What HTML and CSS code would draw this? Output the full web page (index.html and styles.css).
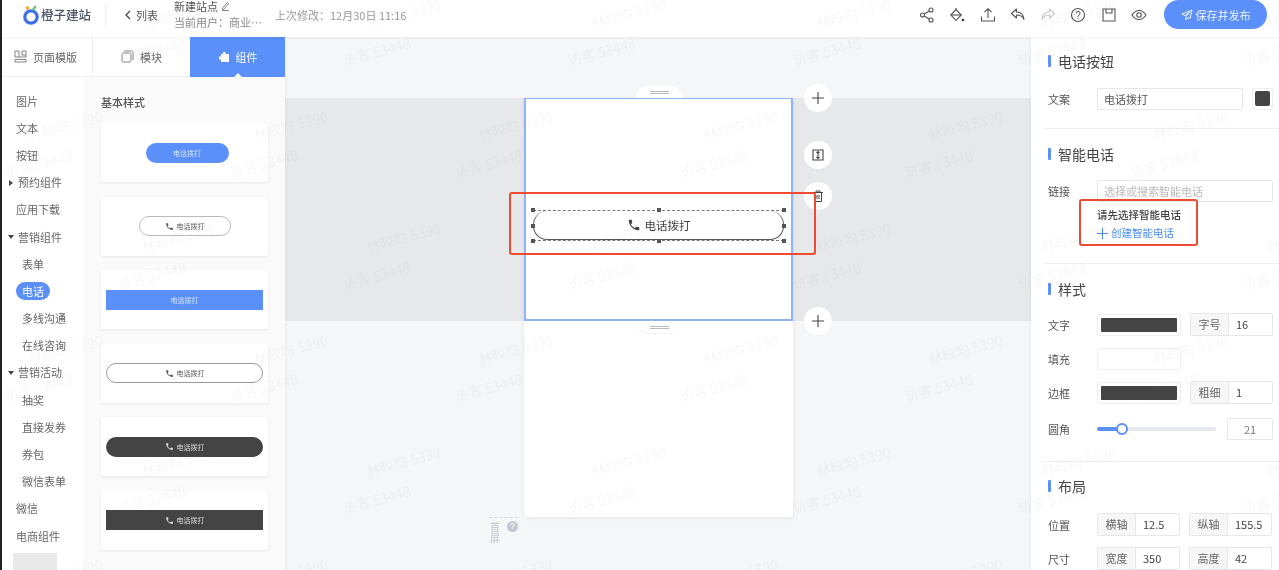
FILE: index.html
```html
<!DOCTYPE html>
<html lang="zh-CN">
  <head>
    <meta charset="UTF-8" />
    <meta name="viewport" content="width=device-width, initial-scale=1.0" />
    <title>橙子建站</title>
    <link rel="stylesheet" href="styles.css">
  </head>
  <body>
    <svg class="defs" width="0" height="0">
      <symbol id="phone" viewBox="0 0 24 24">
        <path d="M6.62 10.79c1.44 2.83 3.76 5.14 6.59 6.59l2.2-2.2c.27-.27.67-.36 1.02-.24 1.12.37 2.33.57 3.57.57.55 0 1 .45 1 1V20c0 .55-.45 1-1 1-9.39 0-17-7.61-17-17 0-.55.45-1 1-1h3.5c.55 0 1 .45 1 1 0 1.25.2 2.45.57 3.57.11.35.03.74-.25 1.02l-2.2 2.2z" fill="currentColor" />
      </symbol>
    </svg>

    <div class="page">
      <header class="topbar">
        <div class="brand">
          <svg class="logo" width="18" height="23" viewBox="0 0 18 23">
            <circle cx="9" cy="14" r="6.200" fill="none" stroke="#3c6fe8" stroke-width="3.200" />
            <circle cx="5.500" cy="5" r="1.700" fill="#f5a623" />
            <path d="M10 7.500c.3-2.800 1.800-4.500 4.300-5C14.300 5.300 12.800 7.100 10 7.500z" fill="#63c26a" />
          </svg>
          <span class="brand-name">橙子建站</span>
        </div>
        <div class="back">
          <svg width="8" height="10" viewBox="0 0 8 10"><path d="M6 1 2 5l4 4" fill="none" stroke="#444" stroke-width="1.300" /></svg>
          列表
        </div>
        <div class="site-info">
          <div class="site-name">
            新建站点
            <svg width="9" height="10" viewBox="0 0 9 10"><path d="M1.500 7 6.500 1.500l1.300 1.200-5 5.500-1.600.3zM1 9.500h7" fill="none" stroke="#666" stroke-width=".8" /></svg>
          </div>
          <div class="site-user">当前用户：商业…</div>
        </div>
        <div class="modified">上次修改：12月30日 11:16</div>

        <div class="tools">
          <svg width="16" height="16" viewBox="0 0 16 16"><g fill="none" stroke="#555" stroke-width="1.100"><circle cx="3.500" cy="8" r="2" /><circle cx="12" cy="3" r="2" /><circle cx="12" cy="13" r="2" /><path d="M5.300 7 10.200 4M5.300 9l4.900 3" /></g></svg>
          <svg width="16" height="16" viewBox="0 0 16 16"><g fill="none" stroke="#555" stroke-width="1.100"><path d="M7 2.500 1.800 8 7 13.300 12.300 8z" /><path d="M2 8h10" /><path d="M7 2.500V1" /></g><circle cx="14" cy="13" r="1.300" fill="#333" /></svg>
          <svg width="16" height="16" viewBox="0 0 16 16"><path d="M8 11V2M4.500 5 8 1.800 11.500 5M1.500 9.500v4.500h13V9.500" fill="none" stroke="#555" stroke-width="1.100" /></svg>
          <svg width="16" height="16" viewBox="0 0 16 16"><path d="M6.500 2 1.500 6.500l5 4.500V8c3.500 0 6 1 7.500 4.500C13.500 8 11 5 6.500 5z" fill="none" stroke="#555" stroke-width="1.100" stroke-linejoin="round" /></svg>
          <svg width="16" height="16" viewBox="0 0 16 16"><path d="M9.500 2l5 4.500-5 4.500V8C6 8 3.500 9 2 12.500 2.500 8 5 5 9.500 5z" fill="none" stroke="#c4c6cc" stroke-width="1.100" stroke-linejoin="round" /></svg>
          <svg width="16" height="16" viewBox="0 0 16 16"><circle cx="8" cy="8" r="6.500" fill="none" stroke="#555" stroke-width="1.100" /><text class="tool-q" x="8" y="11.500" text-anchor="middle">?</text></svg>
          <svg width="16" height="16" viewBox="0 0 16 16"><path d="M2 2h12v12H2zM5 2v4h6V2" fill="none" stroke="#555" stroke-width="1.100" /></svg>
          <svg width="16" height="16" viewBox="0 0 16 16"><path d="M1 8c2-3.200 4.300-4.500 7-4.500s5 1.300 7 4.500c-2 3.200-4.300 4.500-7 4.500S3 11.200 1 8z" fill="none" stroke="#555" stroke-width="1.100" /><circle cx="8" cy="8" r="2.200" fill="none" stroke="#555" stroke-width="1.100" /></svg>
        </div>
        <button class="publish">
          <svg width="12" height="12" viewBox="0 0 12 12"><path d="M11 1 1 5l3 1.500L9 3 5 7.500V11l2-2.500 2 1z" fill="none" stroke="#fff" stroke-width=".9" stroke-linejoin="round" /></svg>
          保存并发布
        </button>
      </header>

      <div class="main">
        <aside class="left">
          <div class="tabs">
            <div class="tab tab-template">
              <svg width="13" height="13" viewBox="0 0 13 13"><path d="M1 1h4v6H1zM8 1h4v4H8zM1 9.500h11V12H1zM5 7h7V5" fill="none" stroke="#777" stroke-width=".9" /></svg>
              页面模版
            </div>
            <div class="tab tab-module">
              <svg width="13" height="13" viewBox="0 0 13 13"><path d="M3 1h7.500A1.500 1.500 0 0 1 12 2.500V10M1 4.500A1.500 1.500 0 0 1 2.500 3h6A1.500 1.500 0 0 1 10 4.500v6A1.500 1.500 0 0 1 8.500 12h-6A1.500 1.500 0 0 1 1 10.500z" fill="none" stroke="#777" stroke-width=".9" /></svg>
              模块
            </div>
            <div class="tab tab-active">
              <svg width="12" height="12" viewBox="0 0 12 12"><path d="M5 1h2.500v2H11v8H3V8.500H1V5.500h2V3h2z" fill="#fff" /></svg>
              组件
            </div>
          </div>
          <div class="left-body">
            <nav class="nav">
              <a>图片</a>
              <a>文本</a>
              <a>按钮</a>
              <a class="group closed">预约组件</a>
              <a>应用下载</a>
              <a class="group open">营销组件</a>
              <a class="sub">表单</a>
              <a class="sub"><span class="nav-on">电话</span></a>
              <a class="sub">多线沟通</a>
              <a class="sub">在线咨询</a>
              <a class="group open">营销活动</a>
              <a class="sub">抽奖</a>
              <a class="sub">直接发券</a>
              <a class="sub">券包</a>
              <a class="sub">微信表单</a>
              <a>微信</a>
              <a>电商组件</a>
              <div class="nav-blur"></div>
            </nav>
            <div class="styles">
              <h4>基本样式</h4>
              <div class="card"><div class="demo demo-fill-round">电话拨打</div></div>
              <div class="card"><div class="demo demo-line-round"><svg width="9" height="9"><use href="#phone" /></svg>电话拨打</div></div>
              <div class="card"><div class="demo demo-fill-wide">电话拨打</div></div>
              <div class="card"><div class="demo demo-line-wide"><svg width="9" height="9"><use href="#phone" /></svg>电话拨打</div></div>
              <div class="card"><div class="demo demo-dark-round"><svg width="9" height="9"><use href="#phone" /></svg>电话拨打</div></div>
              <div class="card"><div class="demo demo-dark-wide"><svg width="9" height="9"><use href="#phone" /></svg>电话拨打</div></div>
            </div>
          </div>
        </aside>

        <section class="canvas">
          <div class="band"></div>
          <div class="phone">
            <div class="block">
              <span class="handle handle-top"><i></i></span>
              <span class="handle handle-bottom"><i></i></span>
              <div class="selected">
                <div class="call-btn"><svg width="14" height="14"><use href="#phone" /></svg>电话拨打</div>
                <i class="dot d1"></i><i class="dot d2"></i><i class="dot d3"></i>
                <i class="dot d4"></i><i class="dot d5"></i>
                <i class="dot d6"></i><i class="dot d7"></i><i class="dot d8"></i>
              </div>
            </div>
            <span class="float f1"><svg width="14" height="14" viewBox="0 0 14 14"><path d="M7 1v12M1 7h12" stroke="#444" stroke-width="1.100" /></svg></span>
            <span class="float f2"><svg width="14" height="14" viewBox="0 0 14 14"><path d="M2 2h10v10H2zM7 3.500v7M5.500 5 7 3.500 8.500 5M5.500 9 7 10.500 8.500 9" fill="none" stroke="#444" stroke-width="1.100" /></svg></span>
            <span class="float f3"><svg width="14" height="14" viewBox="0 0 14 14"><path d="M2 3.500h10M5 3.500V2h4v1.500M3.500 3.500V12.500h7V3.500M6 6v4M8 6v4" fill="none" stroke="#444" stroke-width="1" /></svg></span>
            <span class="float f4"><svg width="14" height="14" viewBox="0 0 14 14"><path d="M7 1v12M1 7h12" stroke="#444" stroke-width="1.100" /></svg></span>
            <div class="fold">
              <span class="fold-text">首屏</span>
              <span class="fold-help">?</span>
            </div>
          </div>
        </section>

        <aside class="right">
          <section class="panel panel-text">
            <h3>电话按钮</h3>
            <div class="row">
              <label>文案</label>
              <div class="field grow">电话拨打</div>
              <span class="swatch-small"><i></i></span>
            </div>
          </section>
          <section class="panel panel-phone">
            <h3>智能电话</h3>
            <div class="row">
              <label>链接</label>
              <div class="field grow placeholder">选择或搜索智能电话</div>
            </div>
            <div class="tip">
              <p>请先选择智能电话</p>
              <a><svg width="11" height="11" viewBox="0 0 11 11"><path d="M5.500 0v11M0 5.500h11" stroke="#4a8cf0" /></svg>创建智能电话</a>
            </div>
          </section>
          <section class="panel panel-style">
            <h3>样式</h3>
            <div class="row">
              <label>文字</label>
              <span class="swatch"><i></i></span>
              <div class="addon"><b>字号</b><span>16</span></div>
            </div>
            <div class="row">
              <label>填充</label>
              <span class="swatch swatch-empty"></span>
            </div>
            <div class="row">
              <label>边框</label>
              <span class="swatch"><i></i></span>
              <div class="addon"><b>粗细</b><span>1</span></div>
            </div>
            <div class="row row-radius">
              <label>圆角</label>
              <div class="slider"><i></i></div>
              <div class="field value">21</div>
            </div>
          </section>
          <section class="panel panel-layout">
            <h3>布局</h3>
            <div class="row">
              <label>位置</label>
              <div class="addon"><b>横轴</b><span>12.5</span></div>
              <div class="addon"><b>纵轴</b><span>155.5</span></div>
            </div>
            <div class="row">
              <label>尺寸</label>
              <div class="addon"><b>宽度</b><span>350</span></div>
              <div class="addon"><b>高度</b><span>42</span></div>
            </div>
          </section>
        </aside>
      </div>

      <!-- red annotation boxes from the screenshot -->
      <div class="mark mark-button"></div>
      <div class="mark mark-tip"></div>

      <svg class="watermark" width="100%" height="100%">
        <defs>
          <pattern id="wm" width="225" height="224" patternUnits="userSpaceOnUse" patternTransform="translate(-5 -25)">
            <text x="70" y="156" transform="rotate(-15 70 156)">林晈昀 5390</text>
            <text x="183" y="44" transform="rotate(-15 183 44)">林晈昀 5390</text>
            <text x="43" y="194" transform="rotate(-15 43 194)">访客 53448</text>
            <text x="156" y="82" transform="rotate(-15 156 82)">访客 53448</text>
          </pattern>
        </defs>
        <rect width="100%" height="100%" fill="url(#wm)" />
      </svg>
    </div>
  </body>
</html>
```

FILE: styles.css
```css
/* General styles */
html,
body {
  margin: 0;
  height: 100%;
  overflow: hidden;
  background: #222;
}

body {
  font-family: "Noto Sans CJK SC", "Noto Sans", sans-serif;
  font-size: 11px;
  color: #555;
}

.defs {
  position: absolute;
}

.page {
  position: relative;
  display: flex;
  flex-direction: column;
  height: 570px;
  margin-left: 2px;
  background: #f5f6f8;
  overflow: hidden;
  filter: blur(0.5px);
}

/* Top bar */
.topbar {
  position: relative;
  z-index: 3;
  display: flex;
  align-items: center;
  flex: none;
  height: 29px;
  padding-bottom: 8px;
  background: #fff;
  box-shadow: 0 1px 3px rgba(0, 0, 0, 0.06);
}

.brand {
  display: flex;
  align-items: center;
  gap: 1px;
  width: 83px;
  height: 22px;
  margin-left: 20px;
  border-right: 1px solid #eee;
}

.brand-name {
  font-size: 12.500px;
  font-weight: 500;
  color: #4b5563;
  white-space: nowrap;
}

.back {
  display: flex;
  align-items: center;
  gap: 4px;
  width: 50px;
  margin-left: 18px;
  font-size: 11px;
  color: #555;
}

.site-info {
  align-self: flex-start;
  width: 101px;
  line-height: 12px;
}

.site-name {
  display: flex;
  align-items: center;
  gap: 3px;
  color: #555;
}

.site-user {
  margin-top: 4px;
  color: #888;
}

.modified {
  color: #999;
  font-size: 11px;
}

.tools {
  display: flex;
  gap: 14.300px;
  margin-left: auto;
  margin-right: 17px;
}

.tool-q {
  font: 10px "Liberation Sans", sans-serif;
  fill: #555;
}

.publish {
  display: flex;
  align-items: center;
  justify-content: center;
  gap: 3px;
  width: 103px;
  height: 29px;
  margin-right: 12px;
  padding: 0;
  border: none;
  border-radius: 15px;
  background: #5b8ff9;
  color: #eef3ff;
  font: 11px "Noto Sans CJK SC", sans-serif;
}

.main {
  display: flex;
  flex: 1;
  min-height: 0;
}

/* Left panel */
.left {
  position: relative;
  z-index: 2;
  display: flex;
  flex-direction: column;
  flex: none;
  width: 283px;
  background: #fafafb;
  box-shadow: 1px 0 3px rgba(0, 0, 0, 0.04);
}

.tabs {
  display: flex;
  flex: none;
  height: 40px;
  background: #fff;
  border-bottom: 1px solid #f0f0f2;
  box-sizing: border-box;
}

.tab {
  position: relative;
  display: flex;
  align-items: center;
  justify-content: center;
  gap: 6px;
  color: #666;
}

.tab-template {
  width: 91px;
  padding-right: 3px;
  box-sizing: border-box;
  border-right: 1px solid #f0f0f2;
}

.tab-module {
  width: 97px;
}

.tab-active {
  width: 95px;
  height: 40px;
  background: #5b8ff9;
  color: #fff;
}

.tab-active:after {
  content: "";
  position: absolute;
  left: 44px;
  bottom: 0;
  border: 4px solid transparent;
  border-top: 0;
  border-bottom-color: #fafafb;
}

.left-body {
  display: flex;
  flex: 1;
  min-height: 0;
}

.nav {
  flex: none;
  width: 82px;
  padding-top: 10px;
  background: #fff;
}

.nav a {
  position: relative;
  display: flex;
  align-items: center;
  height: 27.200px;
  padding-left: 14px;
  color: #666;
}

.nav a.sub {
  padding-left: 20px;
}

.nav a.group {
  padding-left: 16px;
}

.group:before {
  content: "";
  position: absolute;
  left: 7px;
  top: 11px;
}

.group.closed:before {
  border: 3.500px solid transparent;
  border-left: 4px solid #444;
  border-right: 0;
}

.group.open:before {
  left: 6px;
  top: 12px;
  border: 3.500px solid transparent;
  border-top: 4px solid #444;
  border-bottom: 0;
}

.nav-on {
  margin-left: -6px;
  padding: 0 6px;
  height: 18px;
  line-height: 18px;
  border-radius: 9px;
  background: #5b8ff9;
  color: #fff;
}

.nav-blur {
  width: 44px;
  height: 30px;
  margin: 4px 0 0 11px;
  background: #e9e9ea;
}

.styles {
  flex: 1;
  padding: 0 17px;
}

.styles h4 {
  margin: 17px 0 13px;
  font-size: 11px;
  line-height: 16px;
  font-weight: 500;
  color: #555;
}

.card {
  display: flex;
  align-items: center;
  justify-content: center;
  height: 59px;
  margin-bottom: 14.500px;
  padding: 0 5px;
  background: #fff;
  border-radius: 2px;
  box-shadow: 0 1px 3px rgba(0, 0, 0, 0.08);
}

.demo {
  display: flex;
  align-items: center;
  justify-content: center;
  gap: 3px;
  box-sizing: border-box;
  height: 20px;
  font-size: 7px;
}

.demo-fill-round {
  width: 83px;
  margin-left: 5px;
  border-radius: 10px;
  background: #5b8ff9;
  color: #d8e4fd;
}

.demo-line-round {
  width: 92px;
  border: 1px solid #bbb;
  border-radius: 10px;
  color: #555;
}

.demo-fill-wide {
  width: 100%;
  background: #5b8ff9;
  color: #d8e4fd;
}

.demo-line-wide {
  width: 100%;
  border: 1px solid #999;
  border-radius: 10px;
  color: #555;
}

.demo-dark-round {
  width: 100%;
  border-radius: 10px;
  background: #444;
  color: #ddd;
}

.demo-dark-wide {
  width: 100%;
  background: #444;
  color: #ddd;
}

/* Canvas */
.canvas {
  position: relative;
  flex: 1;
  min-width: 0;
}

.band {
  position: absolute;
  left: 0;
  right: 0;
  top: 61px;
  height: 223px;
  background: #e7e8ea;
}

.phone {
  position: relative;
  width: 269px;
  height: 419px;
  margin: 61px 0 0 239px;
  background: #fff;
  box-shadow: 0 1px 4px rgba(0, 0, 0, 0.08);
  border-radius: 0 0 2px 2px;
}

.block {
  position: relative;
  box-sizing: border-box;
  height: 223px;
  padding: 111px 7px 0;
  border: 2px solid #8fb2fb;
  border-width: 1px 2px 2px 2px;
}

.handle {
  position: absolute;
  left: 110px;
  display: flex;
  align-items: center;
  justify-content: center;
  width: 46px;
  height: 12px;
  background: #fff;
}

.handle i {
  width: 19px;
  height: 1px;
  border-top: 1px solid #bbb;
  border-bottom: 1px solid #bbb;
}

.handle-top {
  top: -13px;
  border-radius: 12px 12px 0 0;
}

.handle-bottom {
  bottom: -14px;
  border-radius: 0 0 12px 12px;
  box-shadow: 0 1px 2px rgba(0, 0, 0, 0.05);
}

.selected {
  position: relative;
  box-sizing: border-box;
  border: 1px dashed #777;
  border-left: none;
  border-right: none;
}

.call-btn {
  display: flex;
  align-items: center;
  justify-content: center;
  gap: 4px;
  height: 29px;
  box-sizing: border-box;
  border: 1px solid #555;
  border-top: none;
  border-radius: 14px;
  color: #444;
  font-size: 11.500px;
}

.dot {
  position: absolute;
  width: 4px;
  height: 4px;
  background: #555;
}

.d1 { left: -2px; top: -3px; }
.d2 { left: calc(50% - 2px); top: -3px; }
.d3 { right: -2px; top: -3px; }
.d4 { left: -2px; top: calc(50% - 2px); }
.d5 { right: -2px; top: calc(50% - 2px); }
.d6 { left: -2px; bottom: -3px; }
.d7 { left: calc(50% - 2px); bottom: -3px; }
.d8 { right: -2px; bottom: -3px; }

.float {
  position: absolute;
  left: 280px;
  display: flex;
  align-items: center;
  justify-content: center;
  width: 28px;
  height: 28px;
  border-radius: 50%;
  background: #fff;
}

.f1 { top: -14px; }
.f2 { top: 43px; }
.f3 { top: 84px; }
.f4 { top: 209px; }

.fold {
  position: absolute;
  left: -35px;
  top: 419px;
  display: flex;
  gap: 7px;
  box-sizing: border-box;
  width: 29px;
  height: 26px;
  padding-left: 1px;
  border-top: 1px dashed #d5d7dd;
}

.fold-text {
  flex: none;
  width: 10px;
  padding-top: 3px;
  font-size: 10px;
  line-height: 11px;
  color: #c0c3cb;
}

.fold-help {
  flex: none;
  width: 11px;
  height: 11px;
  margin-top: 3px;
  border-radius: 50%;
  background: #c5c8d2;
  color: #fff;
  font: 9px/11px "Liberation Sans", sans-serif;
  text-align: center;
}

/* Right panel */
.right {
  position: relative;
  z-index: 2;
  flex: none;
  width: 248px;
  background: #fff;
  box-shadow: -1px 0 3px rgba(0, 0, 0, 0.05);
}

.panel {
  box-sizing: border-box;
  margin-left: 12px;
  padding-right: 6px;
  border-bottom: 1px solid #eeeff1;
}

.panel-text {
  height: 92px;
  padding-top: 14px;
}

.panel-phone {
  height: 135px;
  padding-top: 15px;
}

.panel-style {
  height: 198px;
  padding-top: 15px;
}

.panel-layout {
  padding-top: 14px;
  border-bottom: none;
}

.panel h3 {
  position: relative;
  margin: 0 0 16px;
  padding-left: 15px;
  font-size: 14px;
  line-height: 20px;
  font-weight: 400;
  color: #444;
}

.panel-phone h3 {
  margin-bottom: 15px;
}

.panel-style h3 {
  margin-bottom: 14px;
}

.panel-layout h3 {
  margin-bottom: 17px;
}

.panel h3:before {
  content: "";
  position: absolute;
  left: 5px;
  top: 4px;
  width: 3px;
  height: 12px;
  border-radius: 1px;
  background: #5b8ff9;
}

.row {
  display: flex;
  align-items: center;
  gap: 9px;
  height: 23px;
  margin-bottom: 11px;
}

.row-radius {
  margin-top: 13px;
}

.row label {
  flex: none;
  width: 49px;
  margin-right: -9px;
  padding-left: 5px;
  color: #555;
}

.field {
  display: flex;
  align-items: center;
  box-sizing: border-box;
  height: 22px;
  padding: 0 6px;
  border: 1px solid #e6e7ea;
  border-radius: 2px;
  color: #555;
}

.grow {
  flex: 1;
}

.placeholder {
  color: #bbb;
}

.swatch-small {
  display: flex;
  align-items: center;
  justify-content: center;
  flex: none;
  box-sizing: border-box;
  width: 21px;
  height: 22px;
  border: 1px solid #eee;
  border-radius: 2px;
}

.swatch-small i {
  width: 15px;
  height: 15px;
  background: #444;
  border-radius: 2px;
}

.swatch {
  display: flex;
  align-items: center;
  justify-content: center;
  flex: none;
  box-sizing: border-box;
  width: 84px;
  height: 22px;
  border: 1px solid #eee;
  border-radius: 2px;
}

.swatch i {
  width: 76px;
  height: 14px;
  background: #444;
  border-radius: 1px;
}

.addon {
  display: flex;
  flex: none;
  box-sizing: border-box;
  width: 83px;
  height: 23px;
  border: 1px solid #e6e7ea;
  border-radius: 2px;
  line-height: 21px;
  overflow: hidden;
}

.addon b {
  flex: none;
  width: 37px;
  text-align: center;
  font-weight: 400;
  color: #666;
  background: #f7f7f8;
  border-right: 1px solid #e6e7ea;
}

.addon span {
  padding-left: 7px;
  color: #444;
}

.slider {
  position: relative;
  flex: none;
  width: 119px;
  height: 4px;
  border-radius: 2px;
  background: #e8e9ee;
}

.slider:before {
  content: "";
  position: absolute;
  left: 0;
  top: 0;
  width: 25px;
  height: 4px;
  border-radius: 2px;
  background: #5b8ff9;
}

.slider i {
  position: absolute;
  left: 19px;
  top: -4px;
  width: 8px;
  height: 8px;
  border: 2px solid #5b8ff9;
  border-radius: 50%;
  background: #fff;
}

.value {
  justify-content: center;
  width: 46px;
  margin-left: 2px;
  padding: 0;
  color: #777;
}

.tip {
  margin: -7px 0 0 54px;
}

.tip p {
  margin: 0;
  font-size: 10.500px;
  line-height: 18px;
  font-weight: 500;
  color: #444;
}

.tip a {
  display: flex;
  align-items: center;
  gap: 3px;
  font-size: 10.500px;
  line-height: 18px;
  color: #4a8cf0;
}

/* Overlays */
.mark {
  position: absolute;
  z-index: 4;
  box-sizing: border-box;
  border: 2px solid #ee4b30;
  border-radius: 3px;
}

.mark-button {
  left: 507px;
  top: 192px;
  width: 307px;
  height: 63px;
}

.mark-tip {
  left: 1077px;
  top: 199px;
  width: 119px;
  height: 47px;
}

.watermark {
  position: absolute;
  left: 0;
  top: 0;
  z-index: 5;
  pointer-events: none;
}

.watermark text {
  font-size: 14px;
  fill: rgba(60, 60, 70, 0.04);
  text-anchor: middle;
}
```
